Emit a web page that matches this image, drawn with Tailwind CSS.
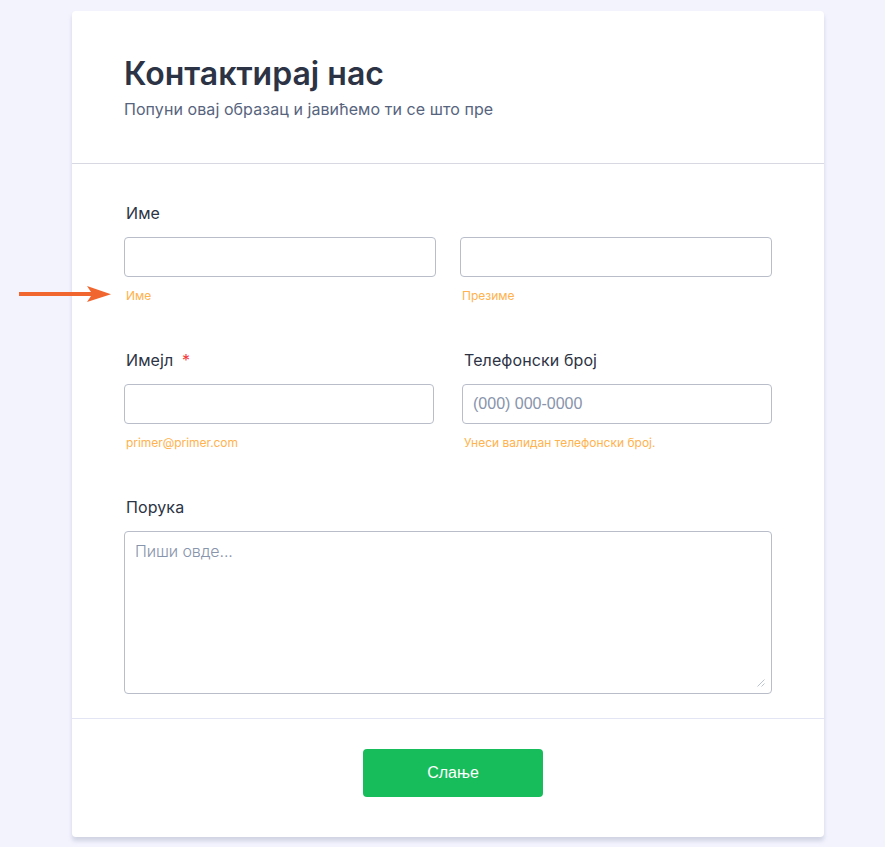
<!DOCTYPE html>
<html lang="sr">
<head>
  <meta charset="UTF-8">
  <title>Контактирај нас</title>
  <script src="https://cdn.jsdelivr.net/npm/@tailwindcss/browser@4"></script>
</head>
<body class="relative h-[847px] overflow-hidden bg-[#f3f3fe] pt-[11px] pl-[72px] font-['Inter',sans-serif] text-[#2c3345]">
  <form class="h-[826px] w-[752px] rounded bg-white shadow-[0_4px_4px_rgba(87,100,126,0.21)]">

    <!-- Header -->
    <div class="h-[153px] border-b border-[#d7d8e1] px-[52px] pt-[43px]">
      <h1 class="text-[32px] leading-10 font-semibold">Контактирај нас</h1>
      <p class="mt-[3px] text-base leading-6 tracking-[0.07px] text-[#57647e]">Попуни овај образац и јавићемо ти се што пре</p>
    </div>

    <div class="px-[52px] pt-[37px]">
      <!-- Name -->
      <div class="h-[147px]">
        <label for="first" class="block pl-0.5 text-base leading-6 tracking-[0.1px]">Име</label>
        <div class="mt-3 grid grid-cols-2 gap-6">
          <div>
            <input id="first" type="text" class="block h-10 w-full rounded border border-[#b8bdc9] px-2.5">
            <div class="mt-[11px] pl-0.5 text-xs leading-[15px] text-[#ffb24d]">Име</div>
          </div>
          <div>
            <input type="text" class="block h-10 w-full rounded border border-[#b8bdc9] px-2.5">
            <div class="mt-[11px] pl-0.5 text-xs leading-[15px] text-[#ffb24d]">Презиме</div>
          </div>
        </div>
      </div>

      <!-- Email and phone -->
      <div class="grid h-[147px] grid-cols-2 gap-7">
        <div>
          <label for="email" class="block pl-0.5 text-base leading-6 tracking-[0.1px]">Имејл <span class="ml-1 text-[#f23a3c]">*</span></label>
          <input id="email" type="email" class="mt-3 block h-10 w-full rounded border border-[#b8bdc9] px-2.5">
          <div class="mt-[11px] pl-0.5 text-xs leading-[15px] tracking-[-0.05px] text-[#ffb24d]">primer@primer.com</div>
        </div>
        <div>
          <label for="phone" class="block pl-0.5 text-base leading-6 tracking-[0.1px]">Телефонски број</label>
          <input id="phone" type="tel" placeholder="(000) 000-0000" class="mt-3 block h-10 w-full rounded border border-[#b8bdc9] px-2.5 font-['Liberation_Sans',sans-serif] text-base placeholder:text-[#8894ab]">
          <div class="mt-[11px] pl-0.5 text-xs leading-[15px] text-[#ffb24d]">Унеси валидан телефонски број.</div>
        </div>
      </div>

      <!-- Message -->
      <label for="message" class="block pl-0.5 text-base leading-6 tracking-[0.1px]">Порука</label>
      <div class="relative mt-3">
        <textarea id="message" placeholder="Пиши овде..." class="block h-[163px] w-full resize-none rounded border border-[#b8bdc9] px-2.5 py-[7px] text-base leading-6 font-light tracking-[-0.1px] placeholder:text-[#8894ab]"></textarea>
        <svg class="absolute right-[7px] bottom-[7px] size-2" viewBox="0 0 8 8" fill="none" stroke="#b9c3d4">
          <path d="M0.5 7.5L7.5 0.5M4.5 7.5L7.5 4.5"/>
        </svg>
      </div>
    </div>

    <!-- Submit -->
    <div class="mt-6 flex border-t border-[#e3e5f5] pt-[30px] pl-[291px]">
      <button type="button" class="h-12 w-[180px] rounded bg-[#18bd5b] font-['Liberation_Sans',sans-serif] text-base text-white">Слање</button>
    </div>
  </form>

  <!-- Arrow pointing at the sublabel -->
  <svg class="absolute top-[285px] left-[19px] h-[18px] w-[92px]" viewBox="0 0 92 18" fill="#f1662f">
    <path d="M0 7H72L68 1L92 9.3L68 17L72 11H0Z"/>
  </svg>
</body>
</html>
